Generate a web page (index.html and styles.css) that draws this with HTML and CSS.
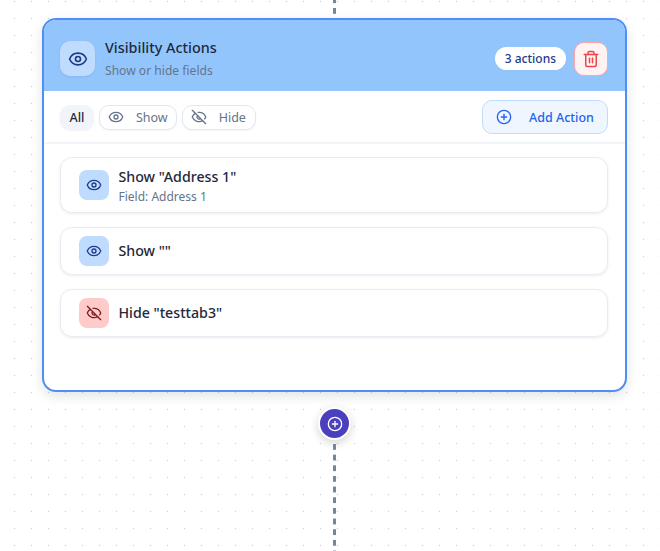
FILE: index.html
```html
<!DOCTYPE html>
<html lang="en">
<head>
<meta charset="utf-8">
<title>Visibility Actions</title>
<link rel="stylesheet" href="styles.css">
</head>
<body>
<svg width="0" height="0" class="defs" aria-hidden="true">
  <symbol id="eye" viewBox="0 0 24 24" fill="none" stroke="currentColor" stroke-width="2" stroke-linecap="round" stroke-linejoin="round">
    <path d="M2.06 12.35a1 1 0 0 1 0-.7 10.75 10.75 0 0 1 19.88 0 1 1 0 0 1 0 .7 10.75 10.75 0 0 1-19.88 0"/>
    <circle cx="12" cy="12" r="3"/>
  </symbol>
  <symbol id="eye-off" viewBox="0 0 24 24" fill="none" stroke="currentColor" stroke-width="2" stroke-linecap="round" stroke-linejoin="round">
    <path d="M10.73 5.08a10.75 10.75 0 0 1 11.21 6.57 1 1 0 0 1 0 .7 10.75 10.75 0 0 1-1.44 2.49"/>
    <path d="M14.08 14.16a3 3 0 0 1-4.24-4.24"/>
    <path d="M17.48 17.5a10.75 10.75 0 0 1-15.42-5.15 1 1 0 0 1 0-.7 10.75 10.75 0 0 1 4.45-5.14"/>
    <path d="m2 2 20 20"/>
  </symbol>
  <symbol id="plus-circle" viewBox="0 0 24 24" fill="none" stroke="currentColor" stroke-width="2" stroke-linecap="round" stroke-linejoin="round">
    <circle cx="12" cy="12" r="10"/>
    <path d="M8 12h8"/>
    <path d="M12 8v8"/>
  </symbol>
  <symbol id="trash" viewBox="0 0 24 24" fill="none" stroke="currentColor" stroke-width="2" stroke-linecap="round" stroke-linejoin="round">
    <path d="M3 6h18"/>
    <path d="M19 6v14a2 2 0 0 1-2 2H7a2 2 0 0 1-2-2V6"/>
    <path d="M8 6V4a2 2 0 0 1 2-2h4a2 2 0 0 1 2 2v2"/>
    <path d="M10 11v6"/>
    <path d="M14 11v6"/>
  </symbol>
</svg>
<main class="canvas">
  <div class="edge edge-top"></div>
  <section class="card">
    <header class="card-head">
      <div class="head-icon"><svg class="i20"><use href="#eye"/></svg></div>
      <div class="head-text">
        <h1 class="head-title">Visibility Actions</h1>
        <p class="head-sub">Show or hide fields</p>
      </div>
      <span class="count">3 actions</span>
      <button class="del" type="button" aria-label="Delete"><svg class="i18"><use href="#trash"/></svg></button>
    </header>
    <div class="toolbar">
      <button class="tab tab-all" type="button">All</button>
      <button class="tab" type="button"><svg class="i16"><use href="#eye"/></svg>Show</button>
      <button class="tab tab-hide" type="button"><svg class="i16"><use href="#eye-off"/></svg>Hide</button>
      <button class="add" type="button"><svg class="i16"><use href="#plus-circle"/></svg>Add Action</button>
    </div>
    <div class="list">
      <article class="item item-tall">
        <div class="item-icon"><svg class="i16"><use href="#eye"/></svg></div>
        <div class="item-text">
          <div class="item-title">Show "Address 1"</div>
          <div class="item-sub">Field: Address 1</div>
        </div>
      </article>
      <article class="item">
        <div class="item-icon"><svg class="i16"><use href="#eye"/></svg></div>
        <div class="item-title">Show ""</div>
      </article>
      <article class="item">
        <div class="item-icon item-icon-hide"><svg class="i16"><use href="#eye-off"/></svg></div>
        <div class="item-title">Hide "testtab3"</div>
      </article>
    </div>
  </section>
  <button class="node" type="button" aria-label="Add step"><svg class="i16"><use href="#plus-circle"/></svg></button>
  <div class="edge edge-bottom"></div>
</main>
</body>
</html>
```
FILE: styles.css
```css
* { box-sizing: border-box; }
html, body { margin: 0; height: 100%; }
body {
  overflow: hidden;
  background: #fff;
  font-family: "Noto Sans", sans-serif;
  color: #1e293b;
}
button { font-family: inherit; }
.defs { position: absolute; }
.i16 { width: 16px; height: 16px; display: block; flex: none; }
.i18 { width: 18px; height: 18px; display: block; }
.i20 { width: 20px; height: 20px; display: block; }

.canvas {
  height: 551px;
  display: flex;
  flex-direction: column;
  background-image: radial-gradient(circle, #d0d4da 0.7px, transparent 1.05px);
  background-size: 17px 17px;
  background-position: 6px -7px;
}
.edge {
  width: 2.5px;
  margin-left: 333px;
  background-image: linear-gradient(to bottom, #76859e 0, #76859e 5.5px, transparent 5.5px);
  background-size: 100% 10.67px;
}
.edge-top { height: 18px; background-position: 0 -2.67px; }
.edge-bottom { height: 107px; margin-top: 4px; }

.card {
  width: 585px;
  height: 374px;
  margin-left: 42px;
  background: #fff;
  border: 2px solid #4f8ef7;
  border-radius: 14px;
  box-shadow: 0 4px 12px rgba(15, 23, 42, 0.12);
  overflow: hidden;
  flex: none;
}
.card-head {
  height: 71px;
  display: flex;
  align-items: center;
  padding: 6px 17px 0 16px;
  background: #93c5fd;
}
.head-icon {
  width: 35px;
  height: 35px;
  margin-right: 10px;
  border-radius: 10px;
  background: #bfdbfe;
  color: #1e3a8a;
  display: flex;
  align-items: center;
  justify-content: center;
  box-shadow: 0 1px 3px rgba(15, 23, 42, 0.08);
}
.head-text { flex: 1; }
.head-title { margin: 0; font-size: 14.4px; line-height: 20px; font-weight: 500; color: #1e293b; }
.head-sub { margin: 5px 0 0; font-size: 12.1px; line-height: 16px; color: #64748b; }
.count {
  height: 23px;
  padding: 0 10px;
  margin-right: 8px;
  border-radius: 12px;
  background: #fff;
  color: #1e3a8a;
  font-size: 12px;
  line-height: 23px;
  font-weight: 500;
}
.del {
  width: 34px;
  height: 34px;
  padding: 0;
  border: 1.5px solid #fca5a5;
  border-radius: 10px;
  background: #fef2f2;
  color: #ef4444;
  display: flex;
  align-items: center;
  justify-content: center;
}
.toolbar {
  height: 53px;
  display: flex;
  align-items: center;
  gap: 5px;
  padding: 1px 17px 0 16px;
  border-bottom: 2px solid #f1f5f9;
}
.tab {
  height: 25px;
  padding: 0 8px;
  display: flex;
  align-items: center;
  gap: 12px;
  border: 1.5px solid #e2e8f0;
  border-radius: 10px;
  background: #fff;
  color: #64748b;
  font-size: 12.5px;
  font-weight: 400;
  box-shadow: 0 1px 2px rgba(15, 23, 42, 0.05);
}
.tab-all { background: #f1f5f9; border-color: #f1f5f9; color: #1e293b; font-weight: 500; padding: 0 8.5px; }
.tab-hide { padding-right: 9px; }
.add {
  margin-left: auto;
  height: 34px;
  width: 126px;
  padding: 0 13px;
  display: flex;
  align-items: center;
  gap: 17px;
  border: 1.5px solid #bfdbfe;
  border-radius: 10px;
  background: #eff6ff;
  color: #2563eb;
  font-size: 12.5px;
  font-weight: 500;
}
.list {
  display: flex;
  flex-direction: column;
  gap: 14px;
  padding: 13px 17px 0 16px;
}
.item {
  height: 48px;
  display: flex;
  align-items: center;
  gap: 10px;
  padding: 0 17.5px;
  border: 1.5px solid #e7ecf3;
  border-radius: 12px;
  background: #fff;
  box-shadow: 0 1px 3px rgba(15, 23, 42, 0.08);
}
.item-tall { height: 56px; }
.item-text { padding-top: 2.5px; }
.item-icon {
  width: 30px;
  height: 30px;
  border-radius: 8px;
  background: #bfdbfe;
  color: #1e3a8a;
  display: flex;
  align-items: center;
  justify-content: center;
  flex: none;
}
.item-icon-hide { background: #fecaca; color: #7f1d1d; }
.item-title { font-size: 14.2px; line-height: 20px; font-weight: 500; color: #1e293b; }
.item-sub { margin-top: 2px; font-size: 12px; line-height: 16px; color: #64748b; }

.node {
  width: 33px;
  height: 33px;
  margin: 15px 0 0 318px;
  padding: 0;
  flex: none;
  border: 2px solid #fff;
  border-radius: 50%;
  background: #4a3fbd;
  color: #fff;
  display: flex;
  align-items: center;
  justify-content: center;
  box-shadow: 0 3px 8px rgba(15, 23, 42, 0.18);
}
```
